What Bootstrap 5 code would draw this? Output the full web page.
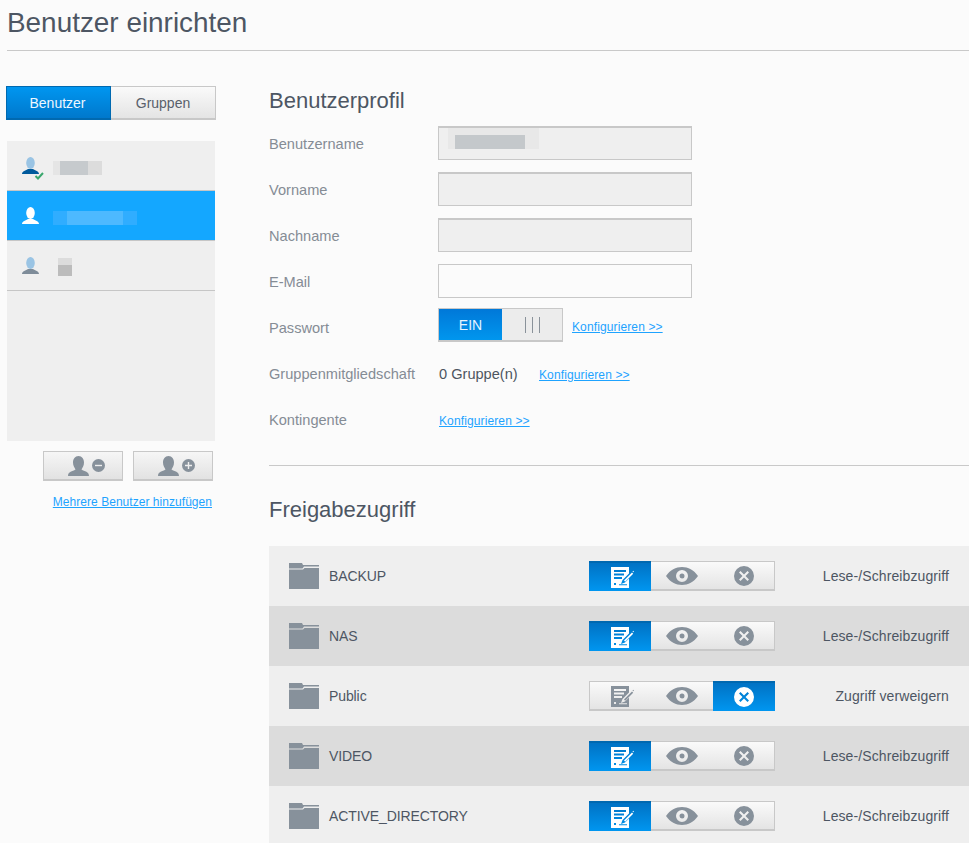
<!DOCTYPE html>
<html lang="de"><head><meta charset="utf-8"><title>Benutzer einrichten</title>
<link rel="stylesheet" href="https://cdn.jsdelivr.net/npm/bootstrap@5.3.0/dist/css/bootstrap.min.css">
<style>
html,body{height:843px;overflow:hidden}
body{background:#fbfbfb;font-family:"Liberation Sans",Arial,sans-serif;color:#4d5560;font-size:14px}
.pg-head{margin:0 0 0 7px;border-bottom:1px solid #c9c9c9;height:51px;font-size:27.9px;line-height:45px;font-weight:400;color:#4d5663}
.pg-main{padding-left:6px}
.side{width:210px;flex:none;padding-top:35px}
.tabs{height:34px}
.tab-on,.tab-off{width:105px;flex:none;text-align:center;line-height:32px;height:34px;border:1px solid #c8c8c8;border-bottom-width:2px}
.tab-on{background:linear-gradient(#0096f0,#0078cc);color:#eef7ff;border-color:#0069b0;padding-right:2px}
.tab-off{background:linear-gradient(#fafafa,#e4e4e4);color:#59606b;border-left:0}
.ulist{margin:21px 1px 0;height:300px;background:#efefef}
.uitem{height:50px;border-bottom:1px solid #c6c6c6;padding-left:15px;gap:14px}
.uitem.is-on{background:#14a7ff}
.uicon{width:17px;height:17px;flex:none;overflow:visible}
.u-a{--h:#9ac4e4;color:#005a9c}
.u-b{--h:#fff;color:#fff}
.u-c{--h:#9ac4e4;color:#7e8c99}
.ucheck{fill:none;stroke:#3aa76d;stroke-width:2}
.blur-1,.blur-2{height:14px;margin-top:4px}
.blur-1{width:49px;background:linear-gradient(90deg,#e5e5e5 7px,#c6cacd 7px,#c6cacd 35px,#dcdcdc 35px)}
.blur-2{width:84px;background:linear-gradient(90deg,#30adff 14px,#4db9ff 14px,#4db9ff 70px,#30adff 70px)}
.blur-3{width:14px;height:18px;margin:3px 0 0 5px;background:linear-gradient(#dcdcdc 7px,#bcbcbc 7px)}
.actbtns{margin-top:10px;padding-left:37px;gap:10px}
.actbtn{width:80px;height:30px;padding-left:6px;background:linear-gradient(#f6f6f6,#e2e2e2);border:1px solid #c8c8c8;border-bottom-width:2px}
.actbtn svg{width:37px;height:20px}
.lnk{color:#1ea3ff;font-size:12px;letter-spacing:.12px;text-decoration:underline}
.morelink{margin:13px 4px 0 0;line-height:15px;text-align:right}
.morelink .lnk{letter-spacing:.04px}
.content{flex:1;margin-left:53px;padding-top:35px;min-width:0}
.sect{font-size:22px;font-weight:400;color:#4d5663;margin:0;line-height:29px}
.frow{height:46px;font-size:14.6px}
.frow label,.flabel{flex:none;color:#858c95;margin:4px 0 0}
.frow label{width:169px}
.flabel{width:170px}
.finput{width:254px;height:34px;border:1px solid #c8c8c8;border-top-width:2px;background:#efefef}
.finput.is-open{background:#fbfbfb;border-top-width:1px}
.finput-blur{width:91px;height:21px;margin-left:9px;padding:7px 14px 0 7px;background:#e8e8e8}
.finput-blur div{height:14px;background:#c4c8cb}
.frows{margin-top:5px}
.toggle{width:125px;height:34px;margin-bottom:4px;border:1px solid #c8c8c8;border-bottom-width:2px}
.tg-on{width:63px;background:linear-gradient(#0078d8,#0096ee);color:#e6f4ff;line-height:32px;text-align:center;font-size:14px}
.tg-off{flex:1;background:#ececec;gap:6px}
.tg-off i{display:block;width:1px;height:16px;background:#8a929a}
.gval{width:100px;color:#4d5560;margin-top:4px}
.cfg-1{margin-left:9px}
.cfg-2{margin-top:4px}
.divider{border:0;border-top:1px solid #c9c9c9;opacity:1;margin:23px 0 29px}
.shares{margin-top:22px}
.srow{height:60px;background:#efefef;padding:0 20px;color:#4d5663}
.srow.alt{background:#dcdcdc}
.sname{width:300px;flex:none;gap:10px;letter-spacing:-.1px}
.sname svg{width:30px;height:26px;flex:none}
.seg{width:186px;height:30px;flex:none;background:linear-gradient(#fafafa,#e4e4e4);border:1px solid #c8c8c8;border-bottom-width:2px}
.seg>span{width:62px;flex:none;display:flex;align-items:center;justify-content:center;height:calc(100% + 3px);margin:-1px 0 -2px}
.seg>span.is-on{background:linear-gradient(#0072c4,#0096f0);border-top:2px solid #0068b0}
.seg>span:first-child{margin-left:-1px}
.seg>span:last-child{margin-right:-1px}
.i-doc{width:23px;height:21px;margin-left:4px}
.i-eye{width:32px;height:18px}
.i-x{width:20px;height:20px}
.sval{flex:1;text-align:right;letter-spacing:.1px}
</style></head><body>
<svg width="0" height="0" class="position-absolute">
<symbol id="person" viewBox="0 0 17 17"><path d="M0 17c0-3 4-3.500 6-5h5c2 1.500 6 2 6 5z"/><ellipse cx="8.500" cy="6" rx="4.300" ry="6" style="fill:var(--h)"/></symbol>
<symbol id="doc" viewBox="0 0 23 21"><path fill-rule="evenodd" d="M0 0h18v6.500l-6.500 6.500-1.500 4 4-1.500 4-4V21H0zM3 3v2h12V3zm0 3.500v2h10v-2zm0 3.500v2h8v-2zm0 6v2h2v-2zm5 1.300v1h8v-1z"/><path d="M13 13.500l8-8 1.200 1.200-8 8zM21.500 4.500l.8-.8 .7 .7-.8 .8z"/></symbol>
<symbol id="eye" viewBox="0 0 32 18"><path fill-rule="evenodd" d="M0 9C4 3 10 0 16 0s12 3 16 9c-4 6-10 9-16 9S4 15 0 9zm16-6a6 6 0 1 0 0 12 6 6 0 0 0 0-12zm0 3.500a2.500 2.500 0 1 1 0 5 2.500 2.500 0 0 1 0-5z"/></symbol>
<symbol id="xc" viewBox="0 0 20 20"><path fill-rule="evenodd" d="M10 0a10 10 0 1 1 0 20 10 10 0 0 1 0-20zM6.500 5L5 6.500 8.500 10 5 13.500 6.500 15 10 11.500l3.500 3.500 1.500-1.500-3.500-3.500L15 6.500 13.500 5 10 8.500z"/></symbol>
<symbol id="folder" viewBox="0 0 30 26"><path d="M0 0h13l1 2h16v1.500H15l-1.500 2H0zM0 6.500h14L15.500 5H30v21H0z"/></symbol>
<symbol id="uplain" viewBox="0 0 37 20"><path d="M10.500 0c3.500 0 5.500 3 5.500 6.500s-1.500 5-2.500 7c3 2 7.500 2 7.500 6.500H0c0-4.500 4.500-4.500 7.500-6.500-1-2-2.500-3.500-2.500-7S7 0 10.500 0z"/><circle cx="30.500" cy="9.500" r="6.500"/></symbol>
</svg>
<h1 class="pg-head">Benutzer einrichten</h1>
<div class="pg-main d-flex">
<aside class="side">
<div class="tabs d-flex"><div class="tab-on">Benutzer</div><div class="tab-off">Gruppen</div></div>
<div class="ulist">
<div class="uitem d-flex align-items-center"><svg class="uicon u-a" fill="currentColor" viewBox="0 0 17 17"><use href="#person"/><path class="ucheck" d="M13.500 19l2.500 2.500 5-5.500"/></svg><div class="blur-1"></div></div>
<div class="uitem is-on d-flex align-items-center"><svg class="uicon u-b" fill="currentColor"><use href="#person"/></svg><div class="blur-2"></div></div>
<div class="uitem d-flex align-items-center"><svg class="uicon u-c" fill="currentColor"><use href="#person"/></svg><div class="blur-3"></div></div>
</div>
<div class="actbtns d-flex">
<div class="actbtn d-flex align-items-center justify-content-center"><svg viewBox="0 0 37 20" fill="#87919b"><use href="#uplain"/><path d="M27 8.800h7v1.400h-7z" fill="#eee"/></svg></div>
<div class="actbtn d-flex align-items-center justify-content-center"><svg viewBox="0 0 37 20" fill="#87919b"><use href="#uplain"/><path d="M27 8.800h2.800V6h1.400v2.800H34v1.400h-2.800V13h-1.400v-2.800H27z" fill="#eee"/></svg></div>
</div>
<div class="morelink"><a class="lnk" href="#">Mehrere Benutzer hinzufügen</a></div>
</aside>
<main class="content">
<h2 class="sect">Benutzerprofil</h2>
<div class="frows">
<div class="frow d-flex align-items-center"><label>Benutzername</label><div class="finput"><div class="finput-blur"><div></div></div></div></div>
<div class="frow d-flex align-items-center"><label>Vorname</label><div class="finput"></div></div>
<div class="frow d-flex align-items-center"><label>Nachname</label><div class="finput"></div></div>
<div class="frow d-flex align-items-center"><label>E-Mail</label><div class="finput is-open"></div></div>
<div class="frow d-flex align-items-center"><label>Passwort</label><div class="toggle d-flex"><div class="tg-on">EIN</div><div class="tg-off d-flex align-items-center justify-content-center"><i></i><i></i><i></i></div></div><a class="lnk cfg-1" href="#">Konfigurieren &gt;&gt;</a></div>
<div class="frow d-flex align-items-center"><span class="flabel">Gruppenmitgliedschaft</span><span class="gval">0 Gruppe(n)</span><a class="lnk cfg-2" href="#">Konfigurieren &gt;&gt;</a></div>
<div class="frow d-flex align-items-center"><span class="flabel">Kontingente</span><a class="lnk cfg-2" href="#">Konfigurieren &gt;&gt;</a></div>
</div>
<hr class="divider">
<h2 class="sect">Freigabezugriff</h2>
<div class="shares">
<div class="srow d-flex align-items-center"><div class="sname d-flex align-items-center"><svg fill="#87919b"><use href="#folder"/></svg>BACKUP</div><div class="seg d-flex"><span class="is-on"><svg class="i-doc" fill="#fff"><use href="#doc"/></svg></span><span><svg class="i-eye" fill="#87919b"><use href="#eye"/></svg></span><span><svg class="i-x" fill="#87919b"><use href="#xc"/></svg></span></div><div class="sval">Lese-/Schreibzugriff</div></div>
<div class="srow alt d-flex align-items-center"><div class="sname d-flex align-items-center"><svg fill="#87919b"><use href="#folder"/></svg>NAS</div><div class="seg d-flex"><span class="is-on"><svg class="i-doc" fill="#fff"><use href="#doc"/></svg></span><span><svg class="i-eye" fill="#87919b"><use href="#eye"/></svg></span><span><svg class="i-x" fill="#87919b"><use href="#xc"/></svg></span></div><div class="sval">Lese-/Schreibzugriff</div></div>
<div class="srow d-flex align-items-center"><div class="sname d-flex align-items-center"><svg fill="#87919b"><use href="#folder"/></svg>Public</div><div class="seg d-flex"><span><svg class="i-doc" fill="#87919b"><use href="#doc"/></svg></span><span><svg class="i-eye" fill="#87919b"><use href="#eye"/></svg></span><span class="is-on"><svg class="i-x" fill="#fff"><use href="#xc"/></svg></span></div><div class="sval">Zugriff verweigern</div></div>
<div class="srow alt d-flex align-items-center"><div class="sname d-flex align-items-center"><svg fill="#87919b"><use href="#folder"/></svg>VIDEO</div><div class="seg d-flex"><span class="is-on"><svg class="i-doc" fill="#fff"><use href="#doc"/></svg></span><span><svg class="i-eye" fill="#87919b"><use href="#eye"/></svg></span><span><svg class="i-x" fill="#87919b"><use href="#xc"/></svg></span></div><div class="sval">Lese-/Schreibzugriff</div></div>
<div class="srow d-flex align-items-center"><div class="sname d-flex align-items-center"><svg fill="#87919b"><use href="#folder"/></svg>ACTIVE_DIRECTORY</div><div class="seg d-flex"><span class="is-on"><svg class="i-doc" fill="#fff"><use href="#doc"/></svg></span><span><svg class="i-eye" fill="#87919b"><use href="#eye"/></svg></span><span><svg class="i-x" fill="#87919b"><use href="#xc"/></svg></span></div><div class="sval">Lese-/Schreibzugriff</div></div>
</div>
</main>
</div>
<script src="https://cdn.jsdelivr.net/npm/bootstrap@5.3.0/dist/js/bootstrap.bundle.min.js"></script>
</body></html>
